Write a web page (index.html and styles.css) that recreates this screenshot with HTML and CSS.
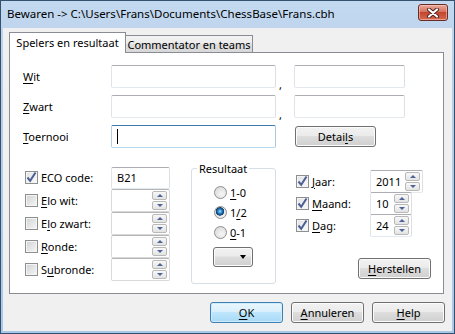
FILE: index.html
```html
<!DOCTYPE html>
<html>
<head>
  <meta name="viewport" content="width=device-width, initial-scale=1.0">
  <link rel="stylesheet" href="styles.css">
</head>
<body>

  <div class="window">
    <div class="titlebar">
      <span class="title">Bewaren -&gt; C:\Users\Frans\Documents\ChessBase\Frans.cbh</span>
      <div class="close">
        <svg width="14" height="10" viewBox="0 0 14 10">
          <path d="M3 1.5 L11 8.5 M11 1.5 L3 8.5" stroke="#4d1f1a" stroke-width="4" stroke-linecap="round"/>
          <path d="M3 1.5 L11 8.5 M11 1.5 L3 8.5" stroke="#fff" stroke-width="2.2" stroke-linecap="round"/>
        </svg>
      </div>
    </div>

    <div class="client">
      <div class="tabs">
        <div class="tab active">Spelers en resultaat</div>
        <div class="tab">Commentator en teams</div>
      </div>

      <div class="panel">
        <!-- player names + tournament -->
        <div class="names">
          <span><u>W</u>it</span>
          <div class="field"></div>
          <span class="comma">,</span>
          <div class="field"></div>

          <span><u>Z</u>wart</span>
          <div class="field"></div>
          <span class="comma">,</span>
          <div class="field"></div>

          <span><u>T</u>oernooi</span>
          <div class="field focus"><span class="caret"></span></div>
          <span></span>
          <div class="btn details"><span>Detai<u>l</u>s</span></div>
        </div>

        <div class="lower">
          <div class="opts">
            <label class="check"><span class="cb on"><svg width="13" height="13" viewBox="0 0 13 13"><path d="M2.5 6.5 L5.2 9.8 L10.5 1.5" fill="none" stroke="#4c5f95" stroke-width="2"/></svg></span><span>ECO code:</span></label>
            <div class="field text">B21</div>

            <label class="check"><span class="cb"></span><span><u>E</u>lo wit:</span></label>
            <div class="field spin dim"><span class="val"></span><span class="arrows"><i class="up"></i><i class="down"></i></span></div>

            <label class="check"><span class="cb"></span><span>E<u>l</u>o zwart:</span></label>
            <div class="field spin dim"><span class="val"></span><span class="arrows"><i class="up"></i><i class="down"></i></span></div>

            <label class="check"><span class="cb"></span><span><u>R</u>onde:</span></label>
            <div class="field spin dim"><span class="val"></span><span class="arrows"><i class="up"></i><i class="down"></i></span></div>

            <label class="check"><span class="cb"></span><span>S<u>u</u>bronde:</span></label>
            <div class="field spin dim"><span class="val"></span><span class="arrows"><i class="up"></i><i class="down"></i></span></div>
          </div>

          <fieldset class="result">
            <legend>Resultaat</legend>
            <div class="result-body">
              <label class="radio"><span class="rb"></span><span><u>1</u>-0</span></label>
              <label class="radio"><span class="rb on"></span><span>1<u>/</u>2</span></label>
              <label class="radio"><span class="rb"></span><span><u>0</u>-1</span></label>
              <div class="btn drop"><span class="tri"></span></div>
            </div>
          </fieldset>

          <div class="date">
            <div class="date-grid">
              <label class="check"><span class="cb on"><svg width="13" height="13" viewBox="0 0 13 13"><path d="M2.5 6.5 L5.2 9.8 L10.5 1.5" fill="none" stroke="#4c5f95" stroke-width="2"/></svg></span><span><u>J</u>aar:</span></label>
              <div class="field spin year"><span class="val">2011</span><span class="arrows"><i class="up"></i><i class="down"></i></span></div>

              <label class="check"><span class="cb on"><svg width="13" height="13" viewBox="0 0 13 13"><path d="M2.5 6.5 L5.2 9.8 L10.5 1.5" fill="none" stroke="#4c5f95" stroke-width="2"/></svg></span><span><u>M</u>aand:</span></label>
              <div class="field spin short"><span class="val">10</span><span class="arrows"><i class="up"></i><i class="down"></i></span></div>

              <label class="check"><span class="cb on"><svg width="13" height="13" viewBox="0 0 13 13"><path d="M2.5 6.5 L5.2 9.8 L10.5 1.5" fill="none" stroke="#4c5f95" stroke-width="2"/></svg></span><span><u>D</u>ag:</span></label>
              <div class="field spin short"><span class="val">24</span><span class="arrows"><i class="up"></i><i class="down"></i></span></div>
            </div>
            <div class="btn reset"><span><u>H</u>erstellen</span></div>
          </div>
        </div>
      </div>

      <div class="actions">
        <div class="btn default"><span><u>O</u>K</span></div>
        <div class="btn"><span><u>A</u>nnuleren</span></div>
        <div class="btn"><span><u>H</u>elp</span></div>
      </div>
    </div>
  </div>

</body>
</html>
```

FILE: styles.css
```css
* {
  box-sizing: border-box;
}

body {
  margin: 0;
  font-family: "Noto Sans", "Open Sans", sans-serif;
  font-size: 11px;
  color: #000;
}

u {
  text-decoration-thickness: 1px;
  text-underline-offset: 2px;
}

/* window frame */
.window {
  width: 455px;
  height: 334px;
  display: flex;
  flex-direction: column;
  border: 1px solid #34506f;
  background: linear-gradient(#c3d9f0, #b9d1ea 60px, #a9c8e8);
  overflow: hidden;
}

.titlebar {
  height: 27px;
  flex-shrink: 0;
  display: flex;
  align-items: center;
  padding: 0 0 3px 6px;
}

.title {
  font-size: 11.5px;
}

.close {
  margin-left: auto;
  margin-right: 6px;
  align-self: flex-start;
  margin-top: 3px;
  width: 30px;
  height: 17px;
  display: flex;
  align-items: center;
  justify-content: center;
  border: 1px solid #6b2a24;
  border-radius: 3px;
  background: linear-gradient(#e9a99b, #d4735f 45%, #c4452f 50%, #d26a4f);
  box-shadow: inset 0 0 0 1px rgba(255, 220, 210, 0.5);
}

.client {
  flex: 1;
  margin: 0 2px 2px;
  padding: 4px 8px 0 6px;
  background: #f0f0f0;
}

/* tabs */
.tabs {
  display: flex;
  align-items: flex-end;
  height: 20px;
}

.tab {
  border: 1px solid #898c95;
  border-bottom: none;
  display: flex;
  align-items: center;
  justify-content: center;
}

.tab.active {
  width: 117px;
  height: 21px;
  margin-bottom: -1px;
  background: #fff;
  position: relative;
  z-index: 1;
  padding-bottom: 2px;
}

.tab:not(.active) {
  width: 128px;
  height: 17px;
  margin-left: -1px;
  background: linear-gradient(#f3f3f3, #ebebeb 50%, #dedede 51%, #d8d8d8);
}

.panel {
  height: 242px;
  border: 1px solid #898c95;
  background: #fff;
  padding: 12px 0 0 13px;
}

/* text boxes */
.field {
  height: 23px;
  border: 1px solid;
  border-color: #abadb3 #dbdfe6 #e3e9ef #e2e3ea;
  border-radius: 2px;
  background: #fff;
}

.field.focus {
  border-color: #3d7bad #a4c9e3 #b7d9ed #b5cfe7;
  display: flex;
  align-items: center;
  padding-left: 5px;
}

.caret {
  width: 1px;
  height: 15px;
  background: #000;
}

.field.text {
  height: 22px;
  display: flex;
  align-items: center;
  padding-left: 5px;
}

.names {
  display: grid;
  grid-template-columns: 88px 165px 18px 111px;
  grid-auto-rows: 23px;
  row-gap: 7px;
  align-items: center;
}

.comma {
  align-self: end;
  margin: 0 0 -4px 3px;
  font-size: 11px;
}

/* buttons */
.btn {
  width: 73px;
  height: 21px;
  display: flex;
  align-items: center;
  justify-content: center;
  border: 1px solid #707070;
  border-radius: 3px;
  background: linear-gradient(#f2f2f2, #ebebeb 45%, #dddddd 50%, #cfcfcf);
  box-shadow: inset 0 0 0 1px #fbfbfb;
  padding-bottom: 1px;
}

.btn.details {
  width: 81px;
  margin-left: 1px;
}

.btn.default {
  border-color: #3c7fb1;
  background: linear-gradient(#eaf6fd, #d9f0fc 45%, #bee6fd 50%, #a7d9f5);
  box-shadow: inset 0 0 0 1px #d0ecfc;
}

/* lower half */
.lower {
  display: flex;
  align-items: flex-start;
  margin: 18px 0 0 2px;
}

.opts {
  display: grid;
  grid-template-columns: 86px 59px;
  grid-auto-rows: 23px;
  align-items: center;
}

.check,
.radio {
  display: flex;
  align-items: center;
  gap: 3px;
  white-space: nowrap;
}

.cb {
  width: 13px;
  height: 13px;
  border: 1px solid #8e8f8f;
  background: linear-gradient(135deg, #cfd1d4, #f7f7f7);
  box-shadow: inset 0 0 0 1px #f4f4f4;
  position: relative;
}

.cb.on {
  background: linear-gradient(135deg, #e1e2e5, #fafafa);
}

.cb svg {
  position: absolute;
  left: -1px;
  top: -1px;
  overflow: visible;
}

/* spin boxes */
.spin {
  display: flex;
  align-items: center;
  padding: 1px 1px 1px 5px;
}

.spin.dim {
  border-color: #b5b5b5 #d9d9d9 #d9d9d9 #d9d9d9;
}

.spin .val {
  flex: 1;
}

.arrows {
  display: flex;
  flex-direction: column;
  gap: 1px;
  margin-right: 1px;
}

.arrows i {
  width: 15px;
  height: 9px;
  border: 1px solid #b9b9b9;
  border-radius: 2px;
  background: linear-gradient(#f8f8f8, #e3e3e3);
  display: flex;
  align-items: center;
  justify-content: center;
}

.arrows i::after {
  content: "";
  border-left: 3px solid transparent;
  border-right: 3px solid transparent;
}

.arrows .up::after {
  border-bottom: 3px solid #4f6396;
}

.arrows .down::after {
  border-top: 3px solid #4f6396;
}

/* result group */
.result {
  margin: -4px 0 0 21px;
  padding: 0;
  width: 85px;
  height: 122px;
  border: 1px solid #d5dfe5;
  border-radius: 3px;
}

.result legend {
  padding: 0 2px;
  margin-left: 5px;
  line-height: 13px;
}

.result-body {
  padding: 7px 0 0 22px;
}

.radio {
  height: 20px;
  gap: 3px;
}

.rb {
  width: 13px;
  height: 13px;
  border-radius: 50%;
  border: 1px solid #8e8f8f;
  background: radial-gradient(circle at 60% 65%, #f6f6f6, #d4d4d4);
}

.rb.on {
  background:
    radial-gradient(circle at 45% 40%, #b9e6ff 0, #3c9ad8 1.5px, #0d4f88 3.5px, #1a3d6a 4px, transparent 4.5px),
    radial-gradient(circle at 60% 65%, #f6f6f6, #d4d4d4);
}

.btn.drop {
  width: 40px;
  height: 20px;
  margin: 5px 0 0 -1px;
  justify-content: flex-end;
  padding-right: 6px;
}

.tri {
  border-left: 3.5px solid transparent;
  border-right: 3.5px solid transparent;
  border-top: 4px solid #000;
}

/* date */
.date {
  margin: 4px 0 0 20px;
}

.date-grid {
  display: grid;
  grid-template-columns: 74px auto;
  grid-auto-rows: 22px;
  align-items: center;
}

.date .field {
  align-self: start;
}

.spin.year {
  width: 53px;
}

.spin.short {
  width: 42px;
}

.btn.reset {
  margin: 22px 0 0 62px;
}

/* dialog buttons */
.actions {
  display: flex;
  justify-content: flex-end;
  gap: 8px;
  margin: 8px -1px 0 0;
}
```
